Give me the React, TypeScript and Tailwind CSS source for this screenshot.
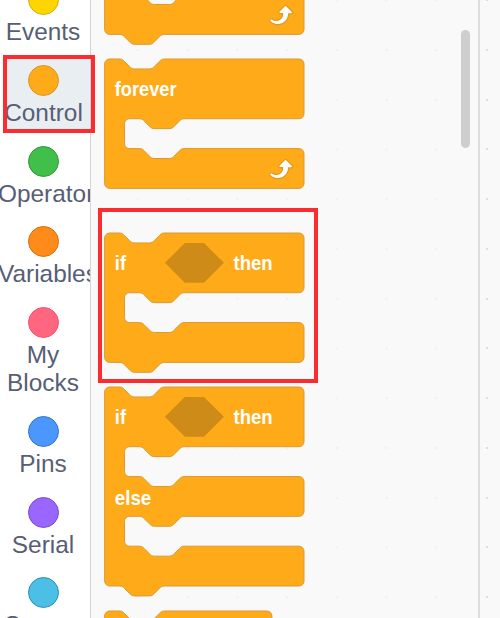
import React from "react";

type Category = { label: string; fill: string; ring: string; active?: boolean; shift?: string };

const categories: Category[] = [
  { label: "Events", fill: "#ffd500", ring: "#d9ad00" },
  { label: "Control", fill: "#ffab19", ring: "#dd951b", active: true, shift: "ml-[1px]" },
  { label: "Operators", fill: "#40bf4a", ring: "#389438", shift: "self-start -ml-[7px]" },
  { label: "Variables", fill: "#ff8c1a", ring: "#db6e00", shift: "self-start -ml-[7px]" },
  { label: "My\nBlocks", fill: "#ff6680", ring: "#ff4d6a" },
  { label: "Pins", fill: "#4c97ff", ring: "#3373cc" },
  { label: "Serial", fill: "#9966ff", ring: "#774dcb" },
  { label: "Sensor", fill: "#4cbfe6", ring: "#2e8eb8" },
];

const NOTCH_RIGHT = "c2 0 3 1 4 2l4 4c1 1 2 2 4 2h12c2 0 3 -1 4 -2l4 -4c1 -1 2 -2 4 -2";
const NOTCH_LEFT = "c-2 0 -3 1 -4 2l-4 4c-1 1 -2 2 -4 2h-12c-2 0 -3 -1 -4 -2l-4 -4c-1 -1 -2 -2 -4 -2";
const MOUTH = `H64${NOTCH_LEFT}h-8a4 4 0 0 0 -4 4v16a4 4 0 0 0 4 4h8${NOTCH_RIGHT}`;

function blockPath(width: number, mouths: number, tail: boolean) {
  const r = width - 4;
  let d = `M0 4a4 4 0 0 1 4 -4H12${NOTCH_RIGHT}H${r}a4 4 0 0 1 4 4v40a4 4 0 0 1 -4 4`;
  for (let i = 0; i < mouths; i++) {
    d += `${MOUTH}H${r}a4 4 0 0 1 4 4v24a4 4 0 0 1 -4 4`;
  }
  d += tail ? `H48${NOTCH_LEFT}H4` : "H4";
  return d + "a4 4 0 0 1 -4 -4Z";
}

function Word({ x, y, width, children }: { x: number; y: number; width: number; children: string }) {
  return (
    <text
      x={x}
      y={y}
      textLength={width}
      lengthAdjust="spacingAndGlyphs"
      className="fill-white text-[16.3px] font-bold"
    >
      {children}
    </text>
  );
}

function LoopArrow() {
  return (
    <g transform="translate(128.3 76)">
      <path
        fill="#e39a1c"
        d="M23.3,11c-0.3,0.6-0.9,1-1.5,1h-1.6c-0.1,1.3-0.5,2.5-1.1,3.6c-0.9,1.7-2.3,3.2-4.1,4.1c-1.7,0.9-3.6,1.2-5.5,0.9c-1.8-0.3-3.5-1.1-4.9-2.3c-0.7-0.7-0.7-1.9,0-2.6c0.6-0.6,1.6-0.7,2.3-0.2H7c0.9,0.6,1.9,0.9,2.9,0.9s1.9-0.3,2.7-0.9c1.1-0.8,1.8-2.1,1.8-3.5h-1.5c-0.9,0-1.7-0.7-1.7-1.7c0-0.4,0.2-0.9,0.5-1.2l4.4-4.4c0.7-0.6,1.7-0.6,2.4,0L23,9.2C23.5,9.7,23.6,10.4,23.3,11z"
      />
      <path
        fill="#fff"
        d="M21.8,11h-2.6c0,1.5-0.3,2.9-1,4.2c-0.8,1.6-2.1,2.8-3.7,3.6c-1.5,0.8-3.3,1.1-4.9,0.8c-1.6-0.2-3.2-1-4.4-2.1c-0.4-0.3-0.4-0.9-0.1-1.2c0.3-0.4,0.9-0.4,1.2-0.1l0,0c1,0.7,2.2,1.1,3.4,1.1s2.3-0.3,3.3-1c0.9-0.6,1.6-1.5,2-2.6c0.3-0.9,0.4-1.8,0.2-2.8h-2.4c-0.4,0-0.7-0.3-0.7-0.7c0-0.2,0.1-0.3,0.2-0.4l4.4-4.4c0.3-0.3,0.7-0.3,0.9,0L22,9.8c0.3,0.3,0.4,0.6,0.3,0.9S22,11,21.8,11z"
      />
    </g>
  );
}

type BlockProps = { width?: number; mouths: number; tail?: boolean; children?: React.ReactNode; size: string };

function Block({ width = 160.3, mouths, tail = false, children, size }: BlockProps) {
  const height = 48 + mouths * 56;
  return (
    <svg viewBox={`0 0 ${width} ${height}`} className={`block shrink-0 overflow-visible ${size}`}>
      <g transform="translate(0.5 0)">
        <path d={blockPath(width, mouths, tail)} fill="#ffab19" stroke="#d99a33" strokeWidth="0.8" />
        {children}
      </g>
    </svg>
  );
}

function Condition() {
  return (
    <>
      <Word x={8.2} y={29.9} width={9}>if</Word>
      <path d="M48.5 24l16 -16h15.4l16 16l-16 16h-15.4Z" fill="#cf8b17" />
      <Word x={103.7} y={29.9} width={31.4}>then</Word>
    </>
  );
}

function Grid() {
  return (
    <svg className="absolute inset-0 h-full w-full">
      <defs>
        <pattern id="grid" x="12.5" y="-24.6" width="49.75" height="49.75" patternUnits="userSpaceOnUse">
          <circle cx="24.9" cy="24.9" r="1.3" fill="#f0f0f0" />
        </pattern>
      </defs>
      <rect width="120%" height="100%" fill="url(#grid)" transform="translate(9.4 0)" />
    </svg>
  );
}

export default function App() {
  return (
    <div className="relative flex h-[618px] w-[500px] overflow-hidden bg-[#f9f9f9] font-['Liberation_Sans',Arial,sans-serif]">
      <nav className="flex w-[91px] shrink-0 flex-col gap-[5.9px] overflow-hidden border-r border-[#d5d5d5] bg-white">
        {categories.map((c, i) => (
          <div
            key={c.label}
            className={`ml-[5px] flex shrink-0 flex-col items-center pt-2 pr-[9px] pb-[5px] ${
              i === 0 ? "-mt-[24px]" : ""
            } ${c.active ? "bg-[#e9eef2]" : ""}`}
          >
            <span
              className="mb-[3px] size-[31px] shrink-0 rounded-full border"
              style={{ backgroundColor: c.fill, borderColor: c.ring }}
            />
            <span
              className={`text-center text-[24.4px] leading-[27.9px] whitespace-pre text-[#575e75] ${c.shift ?? ""}`}
            >
              {c.label}
            </span>
          </div>
        ))}
      </nav>

      <main className="relative flex w-[389px] shrink-0 overflow-hidden border-r-2 border-[#dddddd]">
        <Grid />
        <div className="relative -mt-[95.4px] ml-[13px] flex flex-col items-start">
          <Block mouths={1} tail size="h-[129.4px] w-[199.4px]">
            <LoopArrow />
          </Block>
          <div className="h-[24.8px] shrink-0" />
          <Block mouths={1} size="h-[129.4px] w-[199.4px]">
            <Word x={8.2} y={29.9} width={49.6}>forever</Word>
            <LoopArrow />
          </Block>
          <div className="h-[44.6px] shrink-0" />
          <Block mouths={1} tail size="h-[129.4px] w-[199.4px]">
            <Condition />
          </Block>
          <div className="h-[24.8px] shrink-0" />
          <Block mouths={2} tail size="h-[199px] w-[199.4px]">
            <Condition />
            <Word x={8.2} y={94.5} width={29.3}>else</Word>
          </Block>
          <div className="h-[24.8px] shrink-0" />
          <Block width={134.5} mouths={0} tail size="h-[59.7px] w-[167.3px]" />
        </div>
        <div className="relative mt-[30px] ml-[158.1px] h-[117.5px] w-[9px] shrink-0 rounded-full bg-[#cecece]" />
      </main>

      <aside className="flex flex-1 flex-col gap-[47.75px] pl-[6px]">
        {Array.from({ length: 13 }, (_, i) => (
          <span key={i} className={`size-[2px] shrink-0 rounded-full bg-[#d4d4d4] ${i === 0 ? "-mt-[1px]" : ""}`} />
        ))}
      </aside>

      <div className="absolute top-[54.5px] left-[3px] h-[78px] w-[91.5px] border-4 border-[#fb2c30]" />
      <div className="absolute top-[208px] left-[98px] h-[175px] w-[220px] border-4 border-[#fb2c30]" />
    </div>
  );
}
